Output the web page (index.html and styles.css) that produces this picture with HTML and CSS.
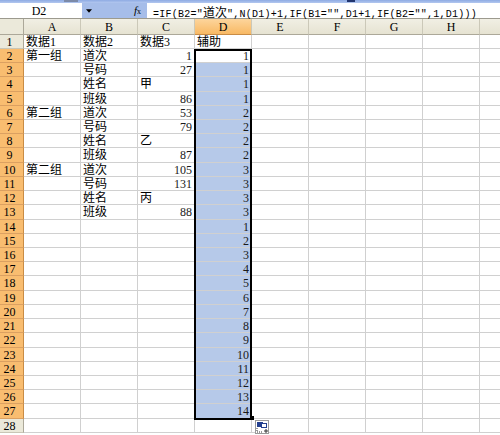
FILE: index.html
```html
<!DOCTYPE html>
<html lang="zh-CN">
<head>
    <meta charset="UTF-8">
    <title>Book1 - 辅助列</title>
    <link rel="stylesheet" href="styles.css">
</head>
<body>
    <div class="toolbar-edge">
        <span class="tb-bit tb-a"></span>
        <span class="tb-bit tb-b"></span>
    </div>

    <div class="formula-bar">
        <div class="name-box">D2</div>
        <div class="name-drop">
            <svg class="drop-arrow" viewBox="0 0 7 4"><path d="M0 0h7L3.5 4z"/></svg>
            <span class="fx"><i>f</i><small>x</small></span>
        </div>
        <div class="formula">=IF(B2="<span class="cjk">道次</span>",N(D1)+1,IF(B1="",D1+1,IF(B2="",1,D1)))</div>
    </div>

    <div class="sheet">
        <div class="row head">
            <div class="rh corner"></div>
            <div class="ch">A</div><div class="ch">B</div><div class="ch">C</div><div class="ch on">D</div>
            <div class="ch">E</div><div class="ch">F</div><div class="ch">G</div><div class="ch">H</div><div class="ch last"></div>
        </div>

        <div class="row"><div class="rh">1</div><div class="c">数据1</div><div class="c">数据2</div><div class="c">数据3</div><div class="c">辅助</div><div class="c"></div><div class="c"></div><div class="c"></div><div class="c"></div><div class="c last"></div></div>
        <div class="row"><div class="rh on">2</div><div class="c">第一组</div><div class="c">道次</div><div class="c n">1</div><div class="c n active">1</div><div class="c"></div><div class="c"></div><div class="c"></div><div class="c"></div><div class="c last"></div></div>
        <div class="row"><div class="rh on">3</div><div class="c"></div><div class="c">号码</div><div class="c n">27</div><div class="c n hl">1</div><div class="c"></div><div class="c"></div><div class="c"></div><div class="c"></div><div class="c last"></div></div>
        <div class="row"><div class="rh on">4</div><div class="c"></div><div class="c">姓名</div><div class="c">甲</div><div class="c n hl">1</div><div class="c"></div><div class="c"></div><div class="c"></div><div class="c"></div><div class="c last"></div></div>
        <div class="row"><div class="rh on">5</div><div class="c"></div><div class="c">班级</div><div class="c n">86</div><div class="c n hl">1</div><div class="c"></div><div class="c"></div><div class="c"></div><div class="c"></div><div class="c last"></div></div>
        <div class="row"><div class="rh on">6</div><div class="c">第二组</div><div class="c">道次</div><div class="c n">53</div><div class="c n hl">2</div><div class="c"></div><div class="c"></div><div class="c"></div><div class="c"></div><div class="c last"></div></div>
        <div class="row"><div class="rh on">7</div><div class="c"></div><div class="c">号码</div><div class="c n">79</div><div class="c n hl">2</div><div class="c"></div><div class="c"></div><div class="c"></div><div class="c"></div><div class="c last"></div></div>
        <div class="row"><div class="rh on">8</div><div class="c"></div><div class="c">姓名</div><div class="c">乙</div><div class="c n hl">2</div><div class="c"></div><div class="c"></div><div class="c"></div><div class="c"></div><div class="c last"></div></div>
        <div class="row"><div class="rh on">9</div><div class="c"></div><div class="c">班级</div><div class="c n">87</div><div class="c n hl">2</div><div class="c"></div><div class="c"></div><div class="c"></div><div class="c"></div><div class="c last"></div></div>
        <div class="row"><div class="rh on">10</div><div class="c">第二组</div><div class="c">道次</div><div class="c n">105</div><div class="c n hl">3</div><div class="c"></div><div class="c"></div><div class="c"></div><div class="c"></div><div class="c last"></div></div>
        <div class="row"><div class="rh on">11</div><div class="c"></div><div class="c">号码</div><div class="c n">131</div><div class="c n hl">3</div><div class="c"></div><div class="c"></div><div class="c"></div><div class="c"></div><div class="c last"></div></div>
        <div class="row"><div class="rh on">12</div><div class="c"></div><div class="c">姓名</div><div class="c">丙</div><div class="c n hl">3</div><div class="c"></div><div class="c"></div><div class="c"></div><div class="c"></div><div class="c last"></div></div>
        <div class="row"><div class="rh on">13</div><div class="c"></div><div class="c">班级</div><div class="c n">88</div><div class="c n hl">3</div><div class="c"></div><div class="c"></div><div class="c"></div><div class="c"></div><div class="c last"></div></div>
        <div class="row"><div class="rh on">14</div><div class="c"></div><div class="c"></div><div class="c"></div><div class="c n hl">1</div><div class="c"></div><div class="c"></div><div class="c"></div><div class="c"></div><div class="c last"></div></div>
        <div class="row"><div class="rh on">15</div><div class="c"></div><div class="c"></div><div class="c"></div><div class="c n hl">2</div><div class="c"></div><div class="c"></div><div class="c"></div><div class="c"></div><div class="c last"></div></div>
        <div class="row"><div class="rh on">16</div><div class="c"></div><div class="c"></div><div class="c"></div><div class="c n hl">3</div><div class="c"></div><div class="c"></div><div class="c"></div><div class="c"></div><div class="c last"></div></div>
        <div class="row"><div class="rh on">17</div><div class="c"></div><div class="c"></div><div class="c"></div><div class="c n hl">4</div><div class="c"></div><div class="c"></div><div class="c"></div><div class="c"></div><div class="c last"></div></div>
        <div class="row"><div class="rh on">18</div><div class="c"></div><div class="c"></div><div class="c"></div><div class="c n hl">5</div><div class="c"></div><div class="c"></div><div class="c"></div><div class="c"></div><div class="c last"></div></div>
        <div class="row"><div class="rh on">19</div><div class="c"></div><div class="c"></div><div class="c"></div><div class="c n hl">6</div><div class="c"></div><div class="c"></div><div class="c"></div><div class="c"></div><div class="c last"></div></div>
        <div class="row"><div class="rh on">20</div><div class="c"></div><div class="c"></div><div class="c"></div><div class="c n hl">7</div><div class="c"></div><div class="c"></div><div class="c"></div><div class="c"></div><div class="c last"></div></div>
        <div class="row"><div class="rh on">21</div><div class="c"></div><div class="c"></div><div class="c"></div><div class="c n hl">8</div><div class="c"></div><div class="c"></div><div class="c"></div><div class="c"></div><div class="c last"></div></div>
        <div class="row"><div class="rh on">22</div><div class="c"></div><div class="c"></div><div class="c"></div><div class="c n hl">9</div><div class="c"></div><div class="c"></div><div class="c"></div><div class="c"></div><div class="c last"></div></div>
        <div class="row"><div class="rh on">23</div><div class="c"></div><div class="c"></div><div class="c"></div><div class="c n hl">10</div><div class="c"></div><div class="c"></div><div class="c"></div><div class="c"></div><div class="c last"></div></div>
        <div class="row"><div class="rh on">24</div><div class="c"></div><div class="c"></div><div class="c"></div><div class="c n hl">11</div><div class="c"></div><div class="c"></div><div class="c"></div><div class="c"></div><div class="c last"></div></div>
        <div class="row"><div class="rh on">25</div><div class="c"></div><div class="c"></div><div class="c"></div><div class="c n hl">12</div><div class="c"></div><div class="c"></div><div class="c"></div><div class="c"></div><div class="c last"></div></div>
        <div class="row"><div class="rh on">26</div><div class="c"></div><div class="c"></div><div class="c"></div><div class="c n hl">13</div><div class="c"></div><div class="c"></div><div class="c"></div><div class="c"></div><div class="c last"></div></div>
        <div class="row"><div class="rh on">27</div><div class="c"></div><div class="c"></div><div class="c"></div><div class="c n hl">14</div><div class="c"></div><div class="c"></div><div class="c"></div><div class="c"></div><div class="c last"></div></div>
        <div class="row"><div class="rh">28</div><div class="c"></div><div class="c"></div><div class="c"></div><div class="c"></div><div class="c"></div><div class="c"></div><div class="c"></div><div class="c"></div><div class="c last"></div></div>

        <!-- selected range D2:D27 -->
        <div class="selection">
            <span class="fill-handle"></span>
            <svg class="autofill" viewBox="0 0 14 14">
                <rect x="0.5" y="0.5" width="13" height="13" fill="#fff" stroke="#9a9a9a"/>
                <rect x="2" y="2" width="6" height="5" fill="#233f8f"/>
                <rect x="6.5" y="3.5" width="5" height="4" fill="#fff" stroke="#233f8f"/>
                <path d="M2 8v4M2 12h6" stroke="#333" stroke-dasharray="1 1"/>
                <path d="M11 9v4M9 11h4" stroke="#333"/>
            </svg>
        </div>
    </div>
</body>
</html>
```

FILE: styles.css
```css
* {
    margin: 0;
    padding: 0;
    box-sizing: border-box;
}

body {
    width: 500px;
    height: 435px;
    overflow: hidden;
    background: #ffffff;
    font-family: "Liberation Serif", "Noto Sans CJK SC", serif;
    font-size: 12px;
    color: #000000;
}

/* bottom edge of the toolbar above */
.toolbar-edge {
    height: 3px;
    background: linear-gradient(#8eabe3, #b3c7ef);
    position: relative;
}

.tb-bit {
    position: absolute;
    top: 0;
    height: 2px;
    background: #22356e;
}

.tb-a {
    left: 64px;
    width: 14px;
    background: #7c8aa8;
}

.tb-b {
    left: 347px;
    width: 8px;
}

/* name box + formula */
.formula-bar {
    display: flex;
    height: 16px;
    border-bottom: 1px solid #9c9a8e;
    background: #ffffff;
}

.name-box {
    width: 82px;
    text-align: center;
    line-height: 17px;
    padding-right: 4px;
}

.name-drop {
    width: 65px;
    display: flex;
    align-items: center;
    background: #a6bde9;
    padding-left: 4px;
}

.drop-arrow {
    width: 6px;
    height: 4px;
    margin-top: 1px;
    fill: #000000;
}

.fx {
    margin-left: 42px;
    font-family: "Liberation Serif", serif;
    font-size: 11px;
    line-height: 17px;
}

.fx small {
    font-size: 8px;
}

.formula {
    flex: 1;
    padding-left: 6px;
    font-family: "Liberation Mono", "Noto Sans CJK SC", monospace;
    font-size: 10px;
    letter-spacing: 0.25px;
    line-height: 17px;
    white-space: nowrap;
}

.formula .cjk {
    font-family: "Noto Sans CJK SC", sans-serif;
    font-size: 12px;
    letter-spacing: 0;
}

/* grid */
.sheet {
    position: relative;
}

.row {
    display: flex;
    height: 14.23px;
}

.row.head {
    height: 15.7px;
}

.rh {
    width: 24px;
    flex: none;
    background: #ebe9da;
    border-right: 1px solid #aca899;
    border-bottom: 1px solid #c9c6b6;
    text-align: center;
    padding-right: 4px;
    line-height: 14px;
}

.rh.on {
    background: #f9bd70;
    border-right-color: #c98c45;
    border-bottom-color: #dba061;
}

.ch {
    width: 57px;
    flex: none;
    background: linear-gradient(#f1efe4, #e6e3d2);
    border-right: 1px solid #cbc8b8;
    border-bottom: 1px solid #aca899;
    text-align: center;
    line-height: 16px;
}

.ch.on {
    background: linear-gradient(#fdd59c, #f8b964);
    border-bottom-color: #c98c45;
}

.corner {
    border-bottom-color: #aca899;
}

.c {
    width: 57px;
    flex: none;
    border-right: 1px solid #d0d0d0;
    border-bottom: 1px solid #d0d0d0;
    padding: 0 2px;
    line-height: 14px;
    white-space: nowrap;
    overflow: hidden;
}

.last {
    width: 20px;
    border-right: none;
}

.n {
    text-align: right;
    color: #1a1a1a;
}

.hl {
    background: #b6c9e9;
}

.active {
    background: #ffffff;
}

/* thick border round the selected range */
.selection {
    position: absolute;
    left: 194px;
    top: 30px;
    width: 58px;
    height: 371px;
    border: 2px solid #000000;
    pointer-events: none;
}

.fill-handle {
    position: absolute;
    left: 100%;
    top: calc(100% - 2px);
    width: 4px;
    height: 4px;
    background: #000000;
}

.autofill {
    position: absolute;
    left: calc(100% + 5px);
    top: calc(100% + 2px);
    width: 14px;
    height: 14px;
}
```
